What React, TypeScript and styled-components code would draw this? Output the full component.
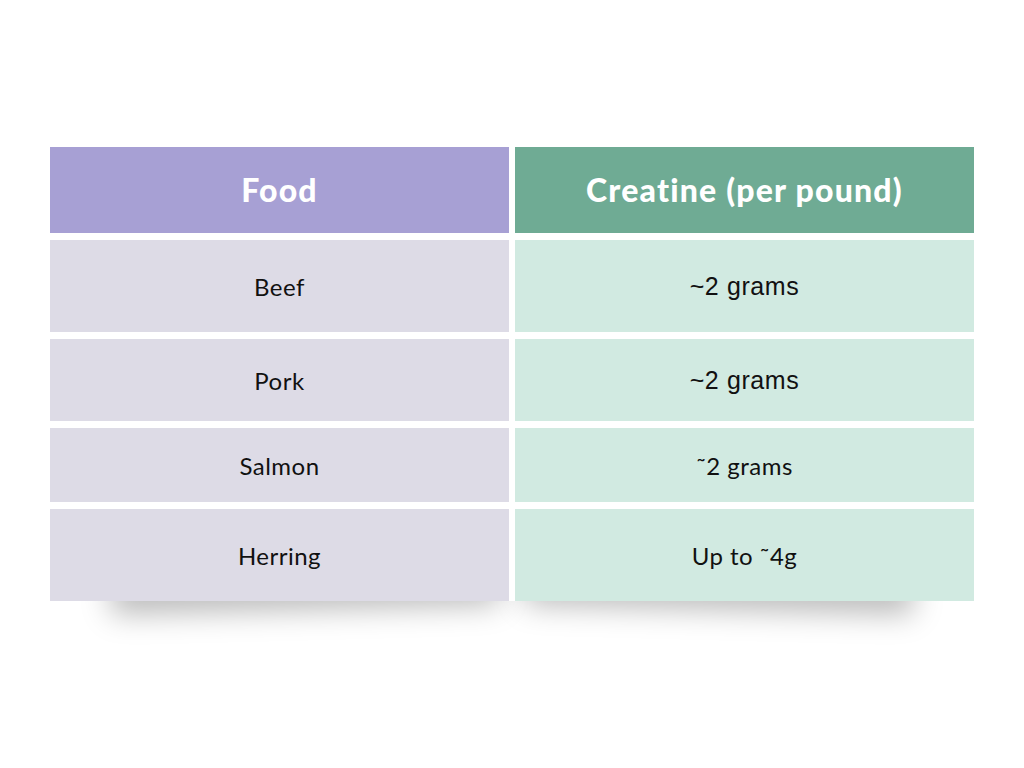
import React from 'react';
import styled, { createGlobalStyle } from 'styled-components';

interface FoodRow {
  food: string;
  amount: string;
  height: number;
  plainFont?: boolean;
}

const rows: FoodRow[] = [
  { food: 'Beef', amount: '~2 grams', height: 92, plainFont: true },
  { food: 'Pork', amount: '~2 grams', height: 82, plainFont: true },
  { food: 'Salmon', amount: '˜2 grams', height: 74 },
  { food: 'Herring', amount: 'Up to ˜4g', height: 92 },
];

const GlobalStyle = createGlobalStyle`
  html, body {
    margin: 0;
    padding: 0;
    background: #ffffff;
  }
  body {
    font-family: Lato, "Noto Sans", sans-serif;
  }
`;

const Page = styled.div`
  width: 1024px;
  height: 768px;
  display: flex;
  justify-content: center;
  align-items: flex-start;
  padding-top: 147px;
  box-sizing: border-box;
`;

const Lifted = styled.div`
  position: relative;
  isolation: isolate;
  width: 924px;

  &::before,
  &::after {
    content: '';
    position: absolute;
    z-index: -1;
    bottom: 30px;
    width: 42%;
    height: 40px;
    box-shadow: 0 38px 30px rgba(0, 0, 0, 0.28);
  }
  &::before {
    left: 60px;
    transform: rotate(-1.5deg);
  }
  &::after {
    right: 60px;
    transform: rotate(1.5deg);
  }
`;

const Grid = styled.div`
  display: grid;
  grid-template-columns: 459px 459px;
  column-gap: 6px;
  row-gap: 7px;
  background: #ffffff;
`;

const HeadCell = styled.div<{ $bg: string }>`
  height: 86px;
  display: flex;
  align-items: center;
  justify-content: center;
  background: ${p => p.$bg};
  color: #ffffff;
  font-family: Lato, "Noto Sans", sans-serif;
  font-weight: 900;
  font-size: 32px;
  letter-spacing: 1.2px;
  padding-bottom: 2px;
  box-sizing: border-box;
`;

const Cell = styled.div<{ $bg: string; $h: number; $plain?: boolean }>`
  height: ${p => p.$h}px;
  display: flex;
  align-items: center;
  justify-content: center;
  background: ${p => p.$bg};
  color: #111111;
  font-family: ${p => (p.$plain ? '"Liberation Sans", Arial, sans-serif' : 'Lato, "Noto Sans", sans-serif')};
  font-size: ${p => (p.$plain ? '25px' : '24px')};
  letter-spacing: ${p => (p.$plain ? '0.6px' : '0.5px')};
`;

export default function App() {
  return (
    <Page>
      <GlobalStyle />
      <Lifted>
        <Grid>
          <HeadCell $bg="#a7a0d4">Food</HeadCell>
          <HeadCell $bg="#6fab94">Creatine (per pound)</HeadCell>
          {rows.map(r => (
            <React.Fragment key={r.food}>
              <Cell $bg="#dddbe6" $h={r.height}>{r.food}</Cell>
              <Cell $bg="#d1eae1" $h={r.height} $plain={r.plainFont}>{r.amount}</Cell>
            </React.Fragment>
          ))}
        </Grid>
      </Lifted>
    </Page>
  );
}
